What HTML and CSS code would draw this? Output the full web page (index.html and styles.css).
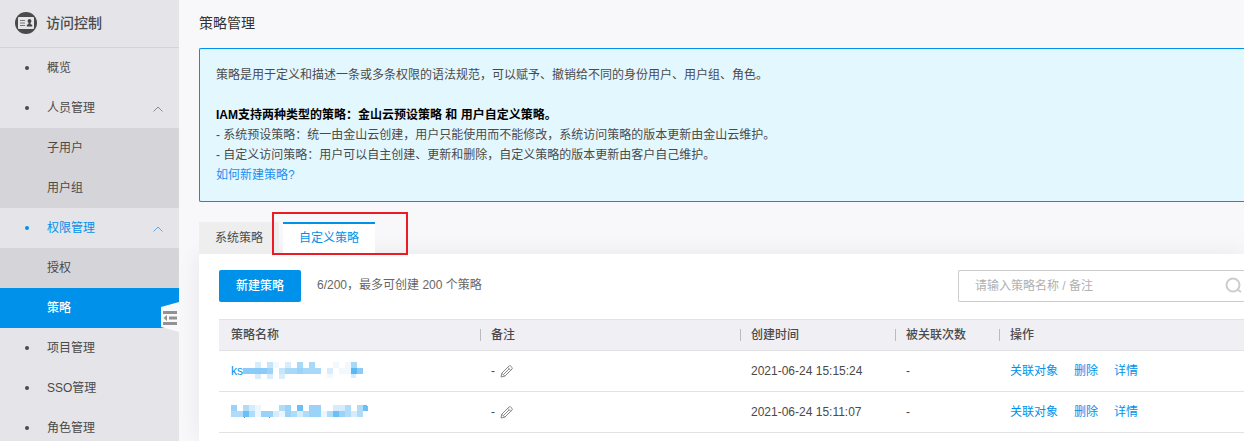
FILE: index.html
```html
<!DOCTYPE html>
<html lang="zh-CN">
<head>
<meta charset="utf-8">
<meta name="viewport" content="width=device-width, initial-scale=1">
<title>策略管理</title>
<link rel="stylesheet" href="styles.css">
</head>
<body>
<div class="layout">
  <aside class="sidebar">
    <div class="brand">
      <svg class="brand-icon" viewBox="0 0 22 22" aria-hidden="true">
        <circle cx="11" cy="11" r="11" fill="#4a4a4a"/>
        <rect x="3" y="5" width="16" height="12" rx="1" fill="#e5e4e9"/>
        <path d="M5 8.500h5M5 11h5M5 13.500h5" stroke="#777"/>
        <path d="M14.500 7a2 2 0 0 1 1 3.700v1.300l1.700 1v1.500h-5.400v-1.500l1.700-1v-1.300a2 2 0 0 1 1-3.700z" fill="#444"/>
      </svg>
      <span>访问控制</span>
    </div>
    <nav class="menu">
      <a class="item" href="#">概览</a>
      <a class="item" href="#">人员管理<svg class="chevron" viewBox="0 0 10 6" aria-hidden="true"><path d="M0.500 5.500 5 1l4.500 4.500"/></svg></a>
      <a class="item sub" href="#">子用户</a>
      <a class="item sub" href="#">用户组</a>
      <a class="item open" href="#">权限管理<svg class="chevron" viewBox="0 0 10 6" aria-hidden="true"><path d="M0.500 5.500 5 1l4.500 4.500"/></svg></a>
      <a class="item sub" href="#">授权</a>
      <a class="item sub current" href="#">策略</a>
      <a class="item" href="#">项目管理</a>
      <a class="item" href="#">SSO管理</a>
      <a class="item" href="#">角色管理</a>
    </nav>
    <button class="collapse" type="button" aria-label="收起菜单">
      <svg viewBox="0 0 18 30" aria-hidden="true">
        <path d="M0 5 18 0v30L0 25z" fill="#f9f9fb"/>
        <path d="M2 10.500h14M8 16h8M2 21.500h14" stroke="#929292" stroke-width="3"/>
        <path d="M2.500 16 6 13v6z" fill="#929292"/>
      </svg>
    </button>
  </aside>

  <main class="main">
    <h1 class="title">策略管理</h1>
    <section class="notice">
      <p>策略是用于定义和描述一条或多条权限的语法规范，可以赋予、撤销给不同的身份用户、用户组、角色。</p>
      <p class="lead">IAM支持两种类型的策略：金山云预设策略 和 用户自定义策略。</p>
      <p>- 系统预设策略：统一由金山云创建，用户只能使用而不能修改，系统访问策略的版本更新由金山云维护。</p>
      <p>- 自定义访问策略：用户可以自主创建、更新和删除，自定义策略的版本更新由客户自己维护。</p>
      <p><a class="help" href="#">如何新建策略?</a></p>
    </section>

    <div class="tabs" role="tablist">
      <button class="tab" type="button" role="tab" aria-selected="false">系统策略</button>
      <button class="tab active" type="button" role="tab" aria-selected="true">自定义策略</button>
      <span class="marker"></span>
    </div>

    <section class="panel">
      <div class="toolbar">
        <button class="create" type="button">新建策略</button>
        <span class="quota">6/200，最多可创建 200 个策略</span>
        <label class="search">
          <input type="text" placeholder="请输入策略名称 / 备注" aria-label="请输入策略名称 / 备注">
          <svg viewBox="0 0 18 18" aria-hidden="true"><circle cx="8" cy="8" r="6.500"/><path d="M12.500 12.500 16 15"/></svg>
        </label>
      </div>

      <table class="table">
        <colgroup><col class="c-name"><col class="c-note"><col class="c-time"><col class="c-count"><col></colgroup>
        <thead>
          <tr><th>策略名称</th><th>备注</th><th>创建时间</th><th>被关联次数</th><th>操作</th></tr>
        </thead>
        <tbody>
          <tr>
            <td><a class="name" href="#">ks<svg width="120" height="18" viewBox="0 0 120 18" shape-rendering="crispEdges" aria-hidden="true">
              <path fill="#d8edfc" d="M12 0h6v6h-6zM42 0h6v6h-6zM12 12h6v5h-6zM36 12h6v5h-6zM24 12h6v5h-6zM84 6h6v6h-6zM108 12h5v4h-5z"/>
              <path fill="#c5e5fb" d="M24 0h6v6h-6zM36 6h6v6h-6z"/>
              <path fill="#f1f9fe" d="M30 0h6v6h-6zM90 0h6v6h-6zM102 0h6v6h-6zM96 6h12v6H96zM84 12h6v4h-6zM114 6h5v4h-5z"/>
              <path fill="#a8d9f9" d="M54 0h6v6h-6zM66 0h6v6h-6zM108 0h6v6h-6zM42 6h36v6H42z"/>
              <path fill="#8accf7" d="M0 6h24v6H0zM114 6h6v6h-6z"/>
              <path fill="#9bd3f8" d="M24 6h6v6h-6zM54 6h6v6h-6z"/>
              <path fill="#5ab8f3" d="M108 6h6v6h-6z"/>
            </svg></a></td>
            <td><span class="note">-<button type="button" class="edit" aria-label="编辑备注"><svg viewBox="0 0 13 13" aria-hidden="true"><path d="M1 12l.8-3.800L9 1q.8-.8 1.600 0l1.400 1.400q.8.800 0 1.600L4.800 11.200zM1.800 8.200l3 3M7.700 2.300l3 3M9.200 3.800 3.300 9.700"/></svg></button></span></td>
            <td>2021-06-24 15:15:24</td>
            <td>-</td>
            <td><span class="actions"><a href="#">关联对象</a><a href="#">删除</a><a href="#">详情</a></span></td>
          </tr>
          <tr>
            <td><a class="name" href="#" aria-label="策略详情"><svg width="138" height="14" viewBox="0 0 138 14" shape-rendering="crispEdges" aria-hidden="true">
              <path fill="#9bd3f8" d="M0 0h6v6H0zM54 0h6v6h-6zM78 0h12v12H78zM30 6h12v6H30zM54 6h6v6h-6zM108 6h6v6h-6z"/>
              <path fill="#b0dcf9" d="M12 0h6v6h-6zM48 0h6v6h-6zM114 0h6v6h-6zM126 0h6v12h-6zM0 6h12v6H0zM18 6h6v6h-6zM60 6h6v6h-6zM72 6h6v6h-6zM96 6h6v6h-6zM114 6h6v6h-6z"/>
              <path fill="#d4ecfc" d="M18 0h6v6h-6zM102 0h12v6h-12zM42 6h6v6h-6zM66 6h6v6h-6zM120 6h6v6h-6z"/>
              <path fill="#ebf6fe" d="M24 0h6v12h-6zM48 6h6v6h-6zM90 6h6v6h-6z"/>
              <path fill="#6cc0f5" d="M66 0h6v6h-6zM12 6h6v6h-6zM102 6h6v6h-6zM132 0h4v1h1v5h-5z"/>
              <path fill="#2d9fe6" d="M13 12h1v1h-1zM38 12h1v1h-1z"/>
            </svg></a></td>
            <td><span class="note">-<button type="button" class="edit" aria-label="编辑备注"><svg viewBox="0 0 13 13" aria-hidden="true"><path d="M1 12l.8-3.800L9 1q.8-.8 1.600 0l1.400 1.400q.8.800 0 1.600L4.800 11.200zM1.800 8.200l3 3M7.700 2.300l3 3M9.200 3.800 3.300 9.700"/></svg></button></span></td>
            <td>2021-06-24 15:11:07</td>
            <td>-</td>
            <td><span class="actions"><a href="#">关联对象</a><a href="#">删除</a><a href="#">详情</a></span></td>
          </tr>
        </tbody>
      </table>
    </section>
  </main>
</div>
</body>
</html>
```

FILE: styles.css
```css
* { box-sizing: border-box; }

body {
  margin: 0;
  background: #f8f8fa;
  color: #4a4a4a;
  font: 12px/20px "Liberation Sans", "Noto Sans CJK SC", sans-serif;
}

button, input { font: inherit; }
button { border: 0; cursor: pointer; }
a { color: #0091ea; text-decoration: none; }

.layout {
  display: flex;
  height: 100vh;
  overflow: hidden;
}

/* Sidebar */
.sidebar {
  position: relative;
  flex: 0 0 179px;
  background: #e5e4e9;
}

.brand {
  display: flex;
  align-items: center;
  gap: 9px;
  height: 48px;
  padding: 0 15px 2px;
  border-bottom: 1px solid #d4d3d8;
  font-size: 14px;
  font-weight: 500;
}

.brand-icon { width: 22px; height: 22px; }

.item {
  display: flex;
  align-items: center;
  height: 40px;
  padding: 0 16px 0 25px;
  color: #4a4a4a;
}

.item::before {
  content: "";
  width: 4px;
  height: 4px;
  margin-right: 18px;
  border-radius: 50%;
  background: currentColor;
}

.item.sub { background: #d5d4d9; }
.item.sub::before { background: none; }
.item.open { color: #0091ea; }
.item.current { background: #0091ea; color: #fff; font-weight: 500; }

.chevron {
  width: 10px;
  height: 6px;
  margin-top: 2px;
  margin-left: auto;
  fill: none;
  stroke: #8c8c90;
}

.open .chevron { stroke: #5ca9e0; }

.collapse {
  position: absolute;
  top: 302px;
  right: 0;
  width: 18px;
  height: 30px;
  padding: 0;
  background: none;
}

.collapse svg { display: block; }

/* Content */
.main {
  flex: 1;
  display: flex;
  flex-direction: column;
  min-width: 0;
  padding-left: 20px;
}

.title {
  margin: 0;
  padding: 13px 0 15px;
  color: #333;
  font-size: 14px;
  font-weight: 400;
  line-height: 20px;
}

.notice {
  padding: 16px;
  border: 1px solid #0091ea;
  border-right: 0;
  border-radius: 2px 0 0 2px;
  background: #e3f7ff;
}

.notice p { margin: 0; }
.notice .lead { margin-top: 20px; color: #000; font-weight: 700; }
.notice .help { color: #1b8fee; }

.tabs {
  position: relative;
  z-index: 1;
  display: flex;
  gap: 4px;
  margin-top: 20px;
}

.tab {
  height: 32px;
  padding: 0 16px 2px;
  border-top: 2px solid #eee;
  background: #eee;
  color: #4a4a4a;
}

.tab.active {
  border-color: #0091ea;
  background: #fff;
  color: #0091ea;
}

.marker {
  position: absolute;
  top: -10px;
  left: 73px;
  width: 136px;
  height: 43px;
  border: 2px solid #eb1c24;
  pointer-events: none;
}

.panel {
  flex: 1;
  padding: 16px 0 0 20px;
  border-radius: 2px 0 0 0;
  background: #fff;
  box-shadow: 0 0 24px rgba(0, 0, 0, .07);
}

.toolbar {
  display: flex;
  gap: 16px;
  height: 32px;
  margin-bottom: 17px;
}

.create {
  padding: 0 17px;
  border-radius: 2px;
  background: #0091ea;
  color: #fff;
  font-weight: 500;
}

.quota { padding-top: 5px; color: #666; }

.search {
  display: flex;
  align-items: center;
  width: 286px;
  margin-left: auto;
  padding: 0 1px 0 16px;
  border: 1px solid #ccc;
  border-right: 0;
  border-radius: 2px 0 0 2px;
}

.search input {
  flex: 1;
  min-width: 0;
  padding: 0;
  border: 0;
  outline: 0;
  background: none;
}

.search input::placeholder { color: #b0b0b0; }

.search svg {
  width: 18px;
  height: 18px;
  fill: none;
  stroke: #ccc;
  stroke-width: 2;
}

/* Policy table */
.table {
  width: 100%;
  border-collapse: separate;
  border-spacing: 0;
  table-layout: fixed;
}

.c-name { width: 261px; }
.c-note { width: 260px; }
.c-time { width: 155px; }
.c-count { width: 104px; }

.table th {
  position: relative;
  height: 32px;
  padding: 0 11px;
  border-top: 1px solid #e2e2e4;
  border-bottom: 1px solid #e2e2e4;
  background: #f0eff4;
  font-weight: 500;
  text-align: left;
}

.table th + th::before {
  content: "";
  position: absolute;
  top: 9px;
  left: 0;
  width: 1px;
  height: 12px;
  background: #bbb;
}

.table td {
  height: 41px;
  padding: 0 11px;
  border-bottom: 1px solid #e2e2e4;
}

.table th:first-child, .table td:first-child { padding-left: 12px; }

.name, .note, .actions { display: flex; align-items: center; }
.note { gap: 5px; }
.actions { gap: 16px; }

.edit { padding: 0; background: none; }

.edit svg {
  display: block;
  width: 13px;
  height: 13px;
  fill: none;
  stroke: #888;
}
```
